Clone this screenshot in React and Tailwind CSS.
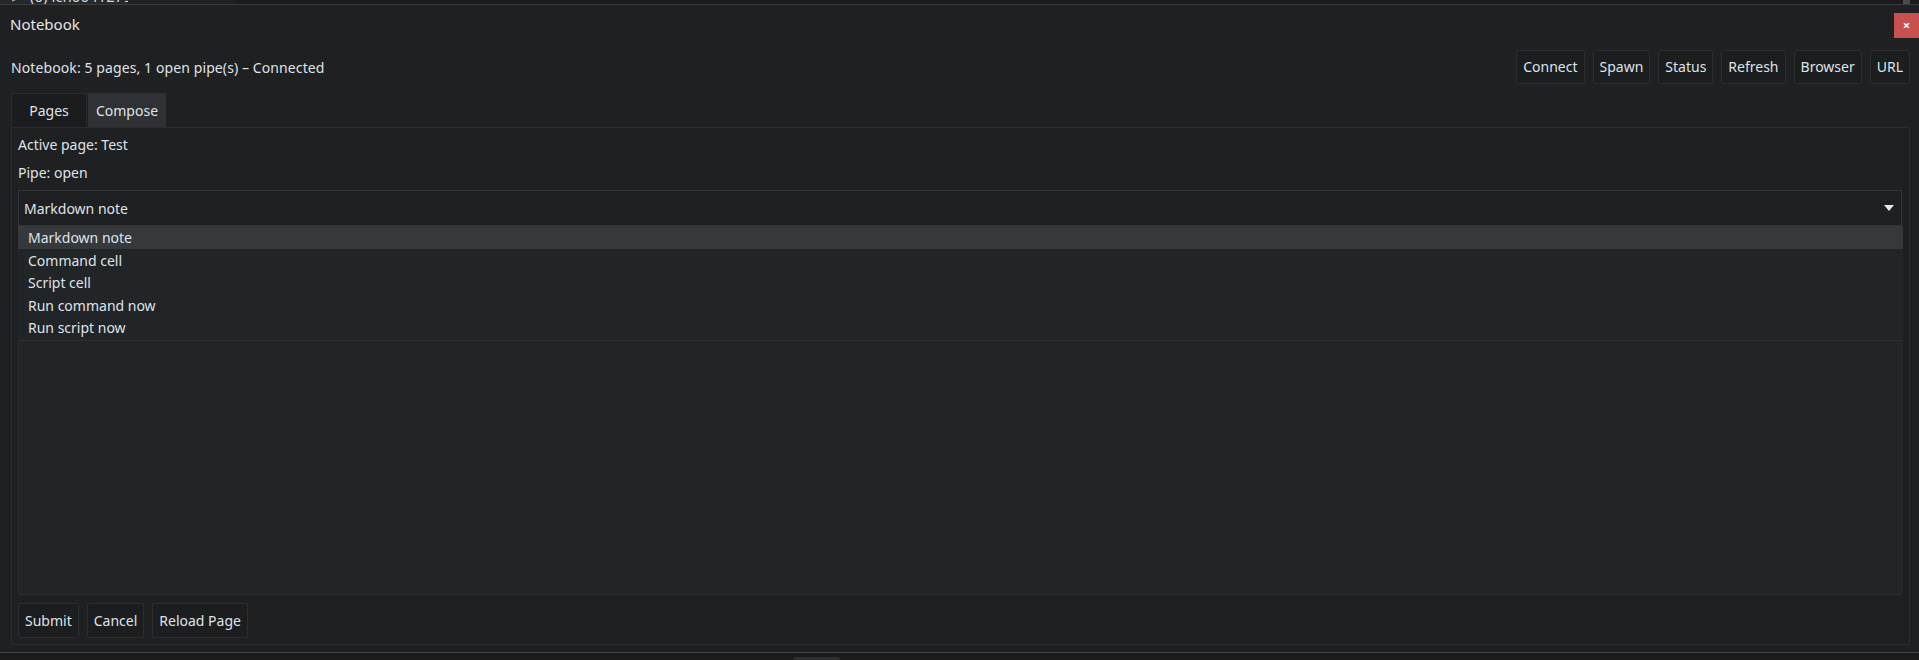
import React from "react";

const font = { fontFamily: '"Noto Sans", "Open Sans", sans-serif' };

function Btn({ children, h = "h-[34px]" }) {
  return (
    <button
      className={`${h} px-[6px] bg-[#1c1d1f] border border-[#2c2d30] rounded-[2px] text-[14px] text-[#dfe3e8] leading-none`}
    >
      {children}
    </button>
  );
}

export default function App() {
  const items = ["Markdown note", "Command cell", "Script cell", "Run command now", "Run script now"];
  return (
    <div className="w-[1919px] h-[660px] overflow-hidden bg-[#1f2022] text-[#dfe3e8] flex flex-col" style={font}>
      {/* top strip of underlying window */}
      <div className="h-[5px] shrink-0 flex border-b border-[#3b3c3e] bg-[#1a1b1d] overflow-hidden">
        <div className="w-[128px] h-[4px] shrink-0 bg-[#25282b] overflow-hidden flex items-start pl-[12px] gap-[10px]">
          <div className="h-[4px] overflow-hidden shrink-0">
            <div className="text-[15px] leading-[15px] -mt-[11px] text-[#aab0b6] whitespace-nowrap">▸</div>
          </div>
          <div className="h-[4px] overflow-hidden shrink-0">
            <div className="text-[15px] leading-[15px] -mt-[11px] text-[#cfd6dc] whitespace-nowrap">(0) ich00412797</div>
          </div>
        </div>
        <div className="w-[108px] bg-[#1e2022]" />
        <div className="flex-1" />
        <div className="w-[7px] bg-[#4a4b4d] mr-[9px]" />
      </div>

      {/* dialog */}
      <div className="flex-1 flex flex-col min-h-0">
        {/* title row */}
        <div className="flex items-start justify-between pl-[10px] pt-[8px] h-[33px] shrink-0">
          <div className="text-[15px] leading-[23px] text-[#e6e6e6]">Notebook</div>
          <button className="w-[25px] h-[25px] bg-[#c75050] text-white text-[13px] font-bold leading-none flex items-center justify-center">
            ×
          </button>
        </div>

        {/* status row */}
        <div className="flex items-center justify-between pl-[11px] pr-[9px] mt-[12px] h-[34px] shrink-0">
          <div className="text-[14px] tracking-[0.1px] text-[#dfe3e8]">Notebook: 5 pages, 1 open pipe(s) – Connected</div>
          <div className="flex gap-[8px]">
            <Btn>Connect</Btn>
            <Btn>Spawn</Btn>
            <Btn>Status</Btn>
            <Btn>Refresh</Btn>
            <Btn>Browser</Btn>
            <Btn>URL</Btn>
          </div>
        </div>

        {/* tabs */}
        <div className="flex pl-[11px] mt-[9px] h-[34px] shrink-0">
          <div className="w-[76px] h-full bg-[#1b1c1e] border border-b-0 border-[#2a2b2e] flex items-center justify-center text-[14px]">
            Pages
          </div>
          <div className="w-[78px] ml-[1px] h-full bg-[#2f3134] flex items-center justify-center text-[14px]">
            Compose
          </div>
        </div>

        {/* panel */}
        <div className="flex-1 min-h-0 ml-[11px] mr-[9px] mb-[7px] border border-[#2b2c2f] flex flex-col pl-[6px] pr-[7px] pt-[6px] pb-[6px]">
          <div className="text-[14px] leading-[22px]">Active page: Test</div>
          <div className="text-[14px] leading-[22px] mt-[6px]">Pipe: open</div>
          <div className="relative mt-[6px] shrink-0">
            <div className="h-[36px] bg-[#1e1f21] border border-[#313336] flex items-center justify-between pl-[5px] pr-[7px] text-[14px]">
              <span>Markdown note</span>
              <svg width="10" height="6" viewBox="0 0 10 6">
                <path d="M0 0 L10 0 L5 6 Z" fill="#e8e8e8" />
              </svg>
            </div>
            <div className="absolute left-0 right-[-1px] top-[36px] z-10 bg-[#222528] border-b border-[#2e3134] pb-[1px]">
              {items.map((t, i) => (
                <div
                  key={t}
                  className={`h-[22.5px] flex items-center pl-[10px] text-[14px] ${i === 0 ? "bg-[#36393c]" : "pt-[1px]"}`}
                >
                  {t}
                </div>
              ))}
            </div>
          </div>
          <div className="flex-1 mt-[6px] bg-[#222528] border border-[#2b2e31] rounded-[2px]" />
          <div className="flex gap-[8px] mt-[8px] shrink-0">
            <Btn h="h-[35px]">Submit</Btn>
            <Btn h="h-[35px]">Cancel</Btn>
            <Btn h="h-[35px]">Reload Page</Btn>
          </div>
        </div>
      </div>

      {/* bottom strip */}
      <div className="h-[8px] shrink-0 border-t border-[#444547] bg-[#1b1b1c] flex items-end">
        <div className="ml-[793px] w-[47px] h-[3px] bg-[#2e2f31] rounded-t-[4px]" />
      </div>
    </div>
  );
}
